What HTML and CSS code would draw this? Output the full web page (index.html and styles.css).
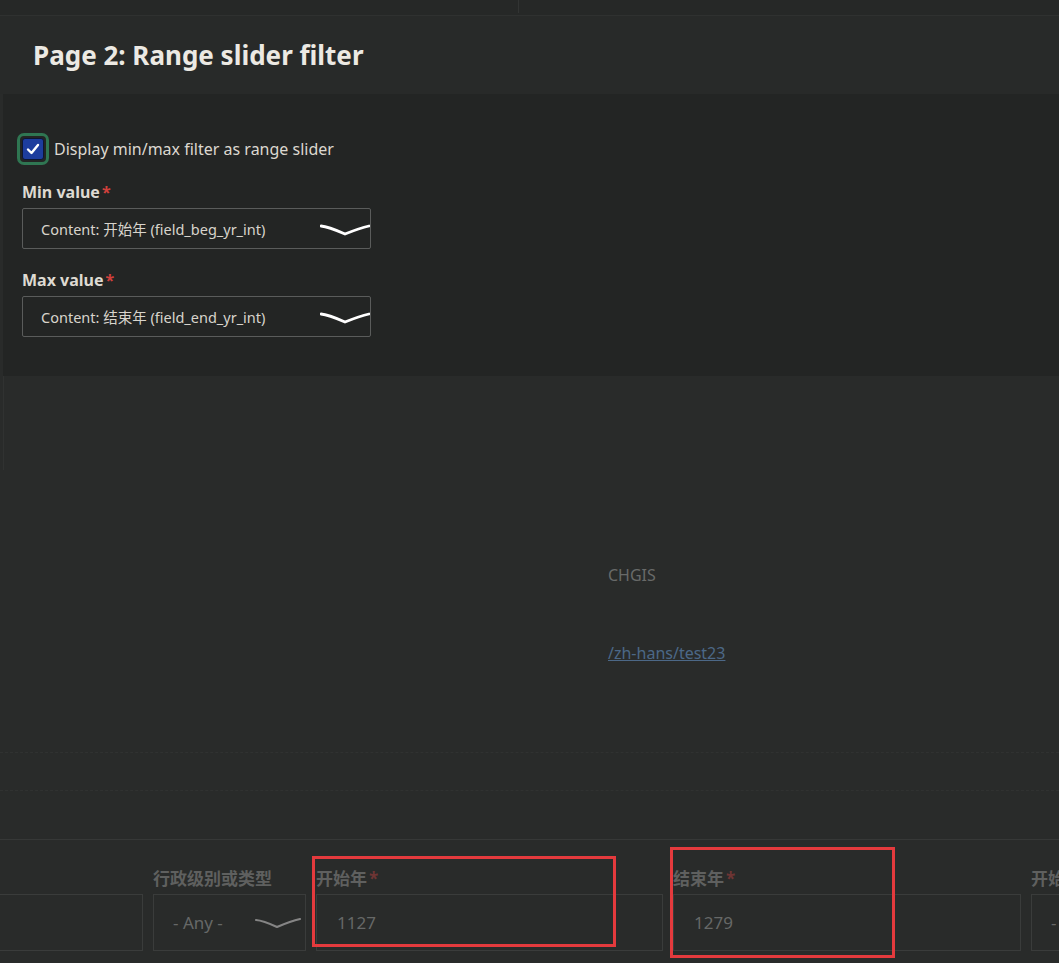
FILE: index.html
```html
<!DOCTYPE html>
<html lang="zh-Hans">
<head>
    <meta charset="UTF-8">
    <meta name="viewport" content="width=device-width, initial-scale=1.0">
    <title>Page 2: Range slider filter</title>
    <link rel="stylesheet" href="styles.css">
</head>
<body>
    <div class="topbar">
        <div class="topbar-left"></div>
    </div>

    <div class="dialog">
        <div class="dialog-header">
            <h1>Page 2: Range slider filter</h1>
        </div>

        <div class="dialog-body">
            <label class="check-row">
                <span class="checkbox">
                    <span class="checkbox-box">
                        <svg width="14" height="12" viewBox="0 0 14 12">
                            <path d="M2 6.5 L5.5 10 L12 2" fill="none" stroke="#fff" stroke-width="2.4" stroke-linecap="round" stroke-linejoin="round"/>
                        </svg>
                    </span>
                </span>
                Display min/max filter as range slider
            </label>

            <div class="field">
                <div class="field-label">Min value<span class="req">*</span></div>
                <div class="select">
                    <span>Content: 开始年 (field_beg_yr_int)</span>
                    <svg class="chevron" width="50" height="14" viewBox="0 0 50 14">
                        <path d="M1 3 Q8 3.5 25 11 Q40 5 49 3" fill="none" stroke="#fff" stroke-width="2.8" stroke-linecap="round" stroke-linejoin="round"/>
                    </svg>
                </div>
            </div>

            <div class="field">
                <div class="field-label">Max value<span class="req">*</span></div>
                <div class="select">
                    <span>Content: 结束年 (field_end_yr_int)</span>
                    <svg class="chevron" width="50" height="14" viewBox="0 0 50 14">
                        <path d="M1 3 Q8 3.5 25 11 Q40 5 49 3" fill="none" stroke="#fff" stroke-width="2.8" stroke-linecap="round" stroke-linejoin="round"/>
                    </svg>
                </div>
            </div>
        </div>
    </div>

    <div class="page">
        <div class="side-rule"></div>

        <div class="site-info">
            <div class="site-name">CHGIS</div>
            <a class="site-link" href="#">/zh-hans/test23</a>
        </div>

        <div class="rule dashed first"></div>
        <div class="rule dashed"></div>
        <div class="rule solid"></div>

        <div class="filters">
            <div class="filter col-1">
                <div class="filter-label">&nbsp;</div>
                <div class="filter-input"></div>
            </div>
            <div class="filter col-2">
                <div class="filter-label">行政级别或类型</div>
                <div class="filter-input select-dim">
                    <span>- Any -</span>
                    <svg class="chevron" width="46" height="14" viewBox="0 0 46 14">
                        <path d="M1 4 Q8 4.5 22 11 Q36 5 45 3" fill="none" stroke="#858585" stroke-width="2.2" stroke-linecap="round" stroke-linejoin="round"/>
                    </svg>
                </div>
            </div>
            <div class="filter col-3">
                <div class="filter-label">开始年<span class="req">*</span></div>
                <div class="filter-input"><span>1127</span></div>
            </div>
            <div class="filter col-4">
                <div class="filter-label">结束年<span class="req">*</span></div>
                <div class="filter-input"><span>1279</span></div>
            </div>
            <div class="filter col-5">
                <div class="filter-label">开始年份</div>
                <div class="filter-input"><span>- Any -</span></div>
            </div>
        </div>

        <div class="mark mark-start"></div>
        <div class="mark mark-end"></div>
    </div>
</body>
</html>
```

FILE: styles.css
```css
* {
    margin: 0;
    padding: 0;
    box-sizing: border-box;
}

html,
body {
    height: 100%;
    overflow: hidden;
}

body {
    background-color: #292b2a;
    color: #dcd8d0;
    font-family: "Noto Sans", "Noto Sans CJK SC", sans-serif;
}

/* top strip */
.topbar {
    height: 16px;
    background-color: #262827;
    border-bottom: 1px solid #2f3130;
}

.topbar-left {
    width: 519px;
    height: 13px;
    border-right: 1px solid #323433;
}

/* dialog */
.dialog-header {
    height: 78px;
    padding-left: 33px;
    display: flex;
    align-items: center;
    background-color: #282a29;
}

.dialog-header h1 {
    font-size: 26px;
    font-weight: 700;
    color: #ece9e3;
}

.dialog-body {
    height: 282px;
    margin-left: 3px;
    padding: 39px 0 0 14px;
    background-color: #232524;
}

.check-row {
    display: flex;
    align-items: center;
    gap: 5px;
    font-size: 16px;
    color: #dcd8d0;
    height: 32px;
}

.checkbox {
    width: 32px;
    height: 32px;
    border: 3px solid #2f7652;
    border-radius: 7px;
    display: flex;
    align-items: center;
    justify-content: center;
}

.checkbox-box {
    width: 22px;
    height: 22px;
    background-color: #1d3d9e;
    border: 1px solid #0e1733;
    border-radius: 3px;
    display: flex;
    align-items: center;
    justify-content: center;
}

.field {
    margin-top: 17px;
    padding-left: 5px;
}

.field + .field {
    margin-top: 21px;
}

.field-label {
    font-size: 16px;
    font-weight: 700;
    color: #dedad2;
    line-height: 20px;
    margin-bottom: 6px;
}

.req {
    color: #d0403c;
    margin-left: 2px;
}

.select {
    width: 349px;
    height: 41px;
    border: 1px solid #5a5c5b;
    border-radius: 2px;
    display: flex;
    align-items: center;
    justify-content: space-between;
    padding-left: 18px;
    font-size: 14.5px;
    color: #d8d4cc;
}

.select .chevron {
    margin-top: 2px;
}

/* page behind the dialog */
.page {
    position: relative;
    height: 586px;
}

.side-rule {
    margin-left: 3px;
    width: 2px;
    height: 94px;
    border-left: 1px solid #303231;
}

.site-info {
    margin: 95px 0 0 608px;
    font-size: 16px;
    line-height: 20px;
}

.site-name {
    color: #686a69;
}

.site-link {
    display: inline-block;
    margin-top: 58px;
    color: #4c6887;
}

.rule {
    height: 0;
    border-top: 1px dashed #303231;
}

.rule.first {
    margin-top: 89px;
}

.rule.dashed + .rule.dashed {
    margin-top: 37px;
}

.rule.solid {
    margin-top: 48px;
    border-top: 1px solid #363837;
}

.filters {
    display: flex;
    gap: 10px;
    margin-top: 29px;
    margin-left: -10px;
}

.filter {
    flex-shrink: 0;
}

.filter-label {
    font-size: 17px;
    font-weight: 700;
    color: #5f605f;
    line-height: 20px;
    margin-bottom: 5px;
    white-space: nowrap;
}

.filter .req {
    color: #6e3534;
}

.filter-input {
    height: 57px;
    border: 1px solid #3a3c3b;
    display: flex;
    align-items: center;
    padding-left: 19px;
    font-size: 17px;
    color: #666867;
}

.col-1 { width: 153px; }
.col-2 { width: 153px; }
.col-3 { width: 347px; }
.col-4 { width: 348px; }
.col-5 { width: 300px; }

.col-3 .filter-input,
.col-4 .filter-input {
    padding-left: 20px;
}

.select-dim {
    justify-content: space-between;
    padding-right: 4px;
}

/* red annotation boxes drawn over the screenshot */
.mark {
    position: absolute;
    border: 3px solid #e43a3d;
}

.mark-start {
    left: 312px;
    top: 480px;
    width: 304px;
    height: 91px;
}

.mark-end {
    left: 670px;
    top: 471px;
    width: 225px;
    height: 111px;
}
```
